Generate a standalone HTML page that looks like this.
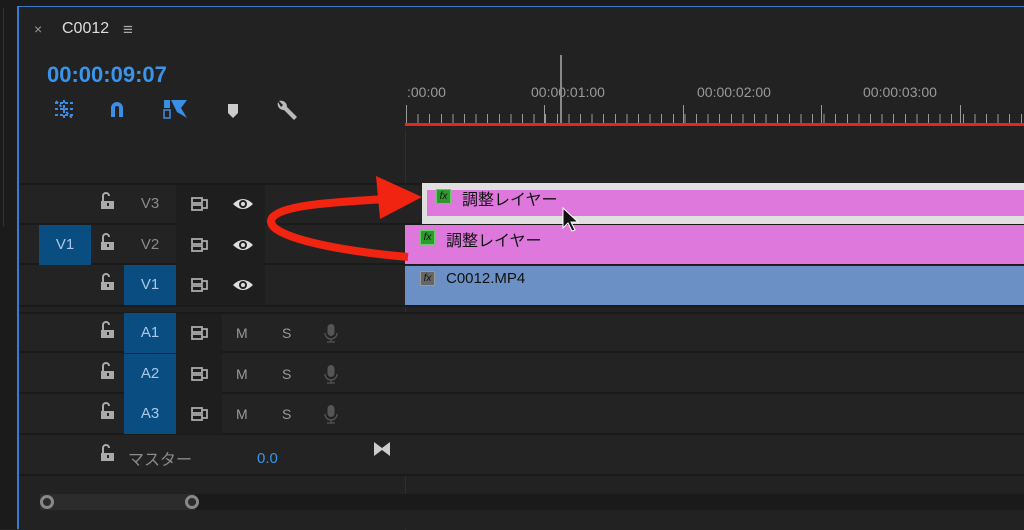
<!DOCTYPE html>
<html><head><meta charset="utf-8"><style>
*{margin:0;padding:0;box-sizing:border-box}
body{width:1024px;height:529px;overflow:hidden;background:#222;font-family:"Liberation Sans","Noto Sans CJK JP",sans-serif;position:relative}
.a{position:absolute}
.t{color:#9a9a9a;font-size:14px}
.row{position:absolute;left:19px;width:1005px;border-bottom:2px solid #1a1a1a}
.lab{position:absolute;width:52px;height:40px;text-align:center;line-height:40px;font-size:15px;color:#8a8a8a}
.blue{background:#0a4d80;color:#aac8e8}
</style></head><body>
<div class="a" style="left:0;top:0;width:17px;height:529px;background:#1b1b1b"></div>
<div class="a" style="left:0;top:0;width:1024px;height:6px;background:#1b1b1b"></div>
<div class="a" style="left:3px;top:8px;width:1px;height:218px;background:#333"></div>
<div class="a" style="left:17px;top:6px;width:2px;height:523px;background:#3b7bd0"></div>
<div class="a" style="left:19px;top:6px;width:1005px;height:1px;background:#3b7bd0"></div>

<div class="a" style="left:34px;top:21px;color:#999;font-size:14px">×</div>
<div class="a" style="left:62px;top:20px;color:#ddd;font-size:16px">C0012</div>
<div class="a" style="left:123px;top:20px;color:#aaa;font-size:17px">≡</div>
<div class="a" style="left:47px;top:62px;color:#3a95ea;font-size:22px;font-weight:bold">00:00:09:07</div>
<svg class="a" style="left:50px;top:97px" width="260" height="26">
<g fill="#3a8ee6" stroke="#3a8ee6">
<path d="M5 6h18M5 12h18M5 18h18M14 3v18M6 4l16 17" stroke-width="2" fill="none" stroke-dasharray="3 2"/>
<path d="M61 20V11a6 6 0 0 1 12 0v9h-4v-9a2 2 0 0 0-4 0v9z" stroke="none"/>
<rect x="114" y="3" width="6" height="8" stroke="none"/><rect x="114" y="13" width="6" height="8" fill="none" stroke-width="1.5"/>
<path d="M121 3l16 0-6 8 6 10-10-6z" stroke="none"/>
</g>
<path d="M178 7h10v9l-5 5-5-5z" fill="#ccc"/>
<path d="M228 5a6 6 0 0 0 6 8l10 10 3-3-10-10a6 6 0 0 0-8-6l4 4-2 2z" fill="#bbb"/>
</svg>

<div class="a" style="left:405px;top:130px;width:1px;height:400px;background:#2e2e2e"></div>
<div class="a t" style="left:407px;top:84px;font-size:14px">:00:00</div>
<div class="a t" style="left:531px;top:84px;font-size:14px">00:00:01:00</div>
<div class="a t" style="left:697px;top:84px;font-size:14px">00:00:02:00</div>
<div class="a t" style="left:863px;top:84px;font-size:14px">00:00:03:00</div>
<div class="a" style="left:406px;top:114px;width:618px;height:9px;background:repeating-linear-gradient(90deg,#999 0 1px,transparent 1px 11.6px)"></div>
<div class="a" style="left:406px;top:105px;width:1px;height:18px;background:#999"></div>
<div class="a" style="left:544px;top:105px;width:1px;height:18px;background:#999"></div>
<div class="a" style="left:683px;top:105px;width:1px;height:18px;background:#999"></div>
<div class="a" style="left:821px;top:105px;width:1px;height:18px;background:#999"></div>
<div class="a" style="left:960px;top:105px;width:1px;height:18px;background:#999"></div>
<div class="a" style="left:560px;top:55px;width:2px;height:68px;background:#888"></div>
<div class="a" style="left:405px;top:123px;width:619px;height:3px;background:#e8241c"></div>

<div class="row" style="top:183px;height:42px;border-top:2px solid #1a1a1a;background:#232323"></div>
<div class="row" style="top:225px;height:40px;background:#232323"></div>
<div class="row" style="top:265px;height:42px;background:#232323"></div>
<div class="row" style="top:312px;height:41px;border-top:2px solid #1a1a1a;background:#232323"></div>
<div class="row" style="top:353px;height:41px;background:#232323"></div>
<div class="row" style="top:394px;height:41px;background:#232323"></div>
<div class="row" style="top:435px;height:41px;background:#232323"></div>
<div class="a" style="left:176px;top:185px;width:89px;height:120px;background:#1e1e1e"></div>
<div class="a" style="left:176px;top:314px;width:46px;height:120px;background:#1e1e1e"></div>
<div class="a" style="left:19px;top:476px;width:1005px;height:53px;background:#222"></div>
<div class="a" style="left:405px;top:476px;width:1px;height:18px;background:#2e2e2e"></div>

<div class="lab blue" style="left:39px;top:225px">V1</div>
<div class="lab" style="left:124px;top:184px">V3</div>
<div class="lab" style="left:124px;top:225px">V2</div>
<div class="lab blue" style="left:124px;top:265px">V1</div>
<div class="lab blue" style="left:124px;top:313px">A1</div>
<div class="lab blue" style="left:124px;top:354px">A2</div>
<div class="lab blue" style="left:124px;top:394px">A3</div>

<svg class="a" style="left:0;top:0" width="405" height="480">
<defs>
<g id="lk"><path d="M-4 -1V-6a3 3 0 0 1 6 0" stroke="#aaa" stroke-width="2" fill="none"/><rect x="-6" y="-1" width="13" height="8" fill="#aaa"/><rect x="0" y="1" width="2" height="3" fill="#222"/></g>
<g id="tg" fill="none" stroke="#aaa" stroke-width="1.8"><rect x="-8" y="-6" width="10" height="5"/><rect x="-8" y="1" width="10" height="5"/><path d="M2 -4h5v8h-5"/></g>
<g id="ey"><path d="M-10 0q10-10 20 0q-10 10-20 0z" fill="#ddd"/><circle r="4" fill="#222"/><circle r="2" fill="#ddd"/></g>
<g id="mic"><rect x="-3.5" y="-9" width="7" height="12" rx="3.5" fill="#555"/><path d="M-6 0a6 6 0 0 0 12 0M0 6v3M-4 9h8" stroke="#555" stroke-width="1.3" fill="none"/></g>
</defs>
<use href="#lk" x="107" y="202"/><use href="#lk" x="107" y="243"/><use href="#lk" x="107" y="283"/>
<use href="#lk" x="107" y="331"/><use href="#lk" x="107" y="372"/><use href="#lk" x="107" y="412"/><use href="#lk" x="107" y="454"/>
<use href="#tg" x="200" y="204"/><use href="#tg" x="200" y="245"/><use href="#tg" x="200" y="285"/>
<use href="#tg" x="200" y="333"/><use href="#tg" x="200" y="374"/><use href="#tg" x="200" y="414"/>
<use href="#ey" x="243" y="204"/><use href="#ey" x="243" y="245"/><use href="#ey" x="243" y="285"/>
<use href="#mic" x="331" y="333"/><use href="#mic" x="331" y="374"/><use href="#mic" x="331" y="414"/>
<path d="M374 442l8 6 8-6v14l-8-6-8 6z" fill="#ccc"/>
</svg>
<div class="a t" style="left:236px;top:325px;font-size:14px">M</div>
<div class="a t" style="left:282px;top:325px;font-size:14px">S</div>
<div class="a t" style="left:236px;top:366px;font-size:14px">M</div>
<div class="a t" style="left:282px;top:366px;font-size:14px">S</div>
<div class="a t" style="left:236px;top:406px;font-size:14px">M</div>
<div class="a t" style="left:282px;top:406px;font-size:14px">S</div>
<div class="a t" style="left:128px;top:446px;font-size:16px;color:#8a8a8a">マスター</div>
<div class="a" style="left:257px;top:450px;font-size:15px;color:#3a95ea">0.0</div>

<div class="a" style="left:40px;top:494px;width:984px;height:16px;background:#1a1a1a"></div>
<div class="a" style="left:40px;top:494px;width:155px;height:16px;background:#2c2c2c"></div>
<div class="a" style="left:40px;top:495px;width:14px;height:14px;border:3px solid #888;border-radius:50%"></div>
<div class="a" style="left:185px;top:495px;width:14px;height:14px;border:3px solid #888;border-radius:50%"></div>

<div class="a" style="left:422px;top:183px;width:602px;height:41px;background:#e0e0e0"></div>
<div class="a" style="left:427px;top:190px;width:597px;height:26px;background:#de78dd"></div>
<div class="a" style="left:405px;top:225px;width:619px;height:39px;background:#de78dd"></div>
<div class="a" style="left:405px;top:266px;width:619px;height:39px;background:#6b90c6"></div>
<div class="a" style="left:436px;top:189px;width:15px;height:15px;background:#2d9a2d;border:1px solid #6c6;font-size:10px;font-style:italic;color:#111;text-align:center;line-height:13px">fx</div>
<div class="a" style="left:420px;top:230px;width:15px;height:15px;background:#2d9a2d;border:1px solid #6c6;font-size:10px;font-style:italic;color:#111;text-align:center;line-height:13px">fx</div>
<div class="a" style="left:420px;top:271px;width:15px;height:15px;background:#666;border:1px solid #999;font-size:10px;font-style:italic;color:#111;text-align:center;line-height:13px">fx</div>
<div class="a" style="left:462px;top:186px;font-size:16px;color:#111">調整レイヤー</div>
<div class="a" style="left:446px;top:227px;font-size:16px;color:#111">調整レイヤー</div>
<div class="a" style="left:446px;top:270px;font-size:15px;color:#111">C0012.MP4</div>

<svg class="a" style="left:0;top:0" width="1024" height="529">
<path d="M408 257C330 250 262 235 272 218C282 204 340 202 385 199" stroke="#f02410" stroke-width="8" fill="none"/>
<path d="M376 176L422 197L380 219z" fill="#f02410"/>
<path d="M563 208v20l5-5 4 8 3-1-4-8h7z" fill="#111" stroke="#fff" stroke-width="1"/>
</svg>
</body></html>
